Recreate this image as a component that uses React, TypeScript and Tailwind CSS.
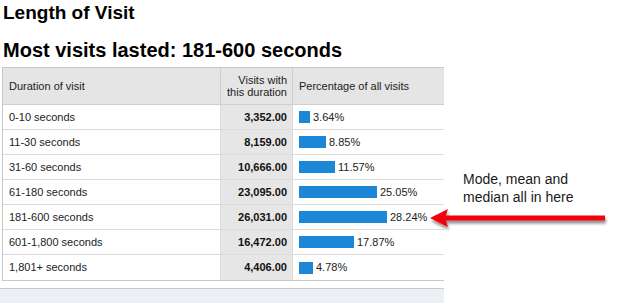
import React from "react";

const rows = [
  { label: "0-10 seconds", visits: "3,352.00", pct: "3.64%", w: 11 },
  { label: "11-30 seconds", visits: "8,159.00", pct: "8.85%", w: 27 },
  { label: "31-60 seconds", visits: "10,666.00", pct: "11.57%", w: 36 },
  { label: "61-180 seconds", visits: "23,095.00", pct: "25.05%", w: 78 },
  { label: "181-600 seconds", visits: "26,031.00", pct: "28.24%", w: 88 },
  { label: "601-1,800 seconds", visits: "16,472.00", pct: "17.87%", w: 55 },
  { label: "1,801+ seconds", visits: "4,406.00", pct: "4.78%", w: 14 },
];

export default function App() {
  return (
    <div className="relative w-[639px] h-[303px] overflow-hidden bg-white font-['Liberation_Sans',Arial,sans-serif] text-[#222]">
      <h1 className="pl-[3px] pt-[3px] text-[19px] leading-[19px] font-bold text-black">Length of Visit</h1>
      <h2 className="mt-[18px] pl-[3px] text-[20px] leading-[20px] font-bold text-black">
        Most visits lasted: 181-600 seconds
      </h2>
      <div className="mt-[7px] ml-[2px] w-[442px] border-l border-t border-b border-[#c8c8c8] text-[11px]">
        <div className="flex h-[37px] border-b border-[#cfcfcf] bg-[#e5e5e5]">
          <div className="flex w-[218px] items-center border-r border-[#cfcfcf] pl-[6px]">Duration of visit</div>
          <div className="flex w-[72px] items-center justify-end border-r border-[#cfcfcf] pr-[5px] text-right leading-[12px]">
            <span>
              Visits with
              <br />
              this duration
            </span>
          </div>
          <div className="flex flex-1 items-center pl-[6px]">Percentage of all visits</div>
        </div>
        {rows.map((r, i) => (
          <div
            key={r.label}
            className={`flex h-[25px] ${i < rows.length - 1 ? "border-b border-[#dcdcdc]" : ""}`}
          >
            <div className="flex w-[218px] items-center border-r border-[#dcdcdc] bg-white pl-[6px]">{r.label}</div>
            <div className="flex w-[72px] items-center justify-end border-r border-[#dcdcdc] bg-[#e6e6e6] pr-[5px] font-bold text-[#111]">
              {r.visits}
            </div>
            <div className="flex flex-1 items-center gap-[3px] bg-white pl-[6px]">
              <div className="h-[12px] bg-[#1b87d6]" style={{ width: r.w }} />
              <span>{r.pct}</span>
            </div>
          </div>
        ))}
      </div>
      <div className="mt-[7px] h-[17px] w-[444px] border-t border-[#c8c8c8] bg-[#eceff4]" />

      <div className="absolute left-[463px] top-[170px] text-[14px] leading-[18px] text-[#1a1a1a]">
        Mode, mean and
        <br />
        median all in here
      </div>

      <svg className="absolute left-[426px] top-[204px]" width="190" height="30" viewBox="0 0 190 30">
        <defs>
          <filter id="sh" x="-10%" y="-50%" width="120%" height="200%">
            <feGaussianBlur in="SourceAlpha" stdDeviation="1.5" />
            <feOffset dx="1" dy="2.5" result="b" />
            <feComponentTransfer>
              <feFuncA type="linear" slope="0.45" />
            </feComponentTransfer>
            <feMerge>
              <feMergeNode />
              <feMergeNode in="SourceGraphic" />
            </feMerge>
          </filter>
        </defs>
        <g filter="url(#sh)">
          <rect x="18" y="11.5" width="161" height="5" fill="#f2000f" />
          <polygon points="4,14 22,5 19,14 22,23" fill="#f2000f" />
        </g>
      </svg>
    </div>
  );
}
